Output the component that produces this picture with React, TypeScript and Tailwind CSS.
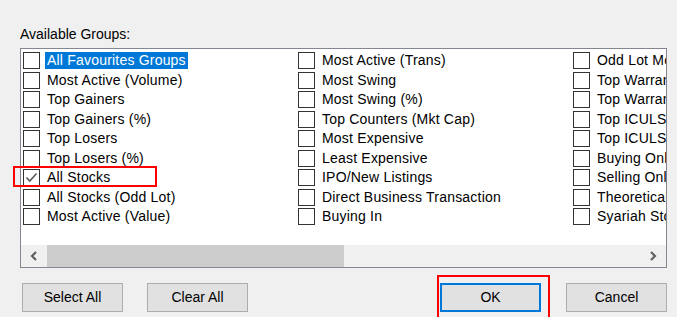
import React from 'react';

const COLUMNS: string[][] = [
  [
    'All Favourites Groups',
    'Most Active (Volume)',
    'Top Gainers',
    'Top Gainers (%)',
    'Top Losers',
    'Top Losers (%)',
    'All Stocks',
    'All Stocks (Odd Lot)',
    'Most Active (Value)',
  ],
  [
    'Most Active (Trans)',
    'Most Swing',
    'Most Swing (%)',
    'Top Counters (Mkt Cap)',
    'Most Expensive',
    'Least Expensive',
    'IPO/New Listings',
    'Direct Business Transaction',
    'Buying In',
  ],
  [
    'Odd Lot Most Active',
    'Top Warrants Gainers',
    'Top Warrants Losers',
    'Top ICULS Gainers',
    'Top ICULS Losers',
    'Buying Only',
    'Selling Only',
    'Theoretical',
    'Syariah Stocks',
  ],
];

const Checkbox: React.FC<{ checked?: boolean }> = ({ checked }) => (
  <span className="w-[17px] h-[17px] shrink-0 border border-[#333333] bg-white flex items-center justify-center">
    {checked && (
      <svg width="13" height="13" viewBox="0 0 13 13">
        <path d="M1.5 6.5 L4.8 10 L11.5 2.5" fill="none" stroke="#5a5a5a" strokeWidth="1.6" />
      </svg>
    )}
  </span>
);

const Row: React.FC<{ label: string; checked?: boolean; selected?: boolean }> = ({ label, checked, selected }) => (
  <div className="h-[19.5px] flex items-center gap-[5px] whitespace-nowrap">
    <Checkbox checked={checked} />
    <span className={`px-[2px] leading-[17px] tracking-[0.2px] ${selected ? 'bg-[#0078d7] text-white' : ''}`}>{label}</span>
  </div>
);

const Button: React.FC<{ label: string; primary?: boolean }> = ({ label, primary }) => (
  <button
    className={`w-[101px] h-[29px] bg-[#e1e1e1] flex items-center justify-center ${
      primary ? 'border-2 border-[#0078d7]' : 'border border-[#adadad]'
    }`}
  >
    {label}
  </button>
);

const Chevron: React.FC<{ dir: 'left' | 'right' }> = ({ dir }) => (
  <svg width="8" height="10" viewBox="0 0 8 10">
    <path
      d={dir === 'left' ? 'M6 1 L2 5 L6 9' : 'M2 1 L6 5 L2 9'}
      fill="none"
      stroke="#606060"
      strokeWidth="2.2"
    />
  </svg>
);

export default function App() {
  return (
    <div className="w-[677px] h-[317px] bg-[#f0f0f0] relative overflow-hidden font-['Liberation_Sans',Arial,sans-serif] text-[14px] text-black">
      <div className="pl-[20px] pt-[26px] leading-[16px]">Available Groups:</div>

      <div className="ml-[20px] mt-[6px] w-[647px] h-[220px] border border-[#828790] bg-white flex flex-col">
        <div className="flex-1 overflow-hidden pt-[2px] pl-[2px]">
          <div className="flex">
            {COLUMNS.map((col, ci) => (
              <div key={ci} className="w-[275px] shrink-0 flex flex-col">
                {col.map((label, ri) => (
                  <Row
                    key={label}
                    label={label}
                    selected={ci === 0 && ri === 0}
                    checked={label === 'All Stocks'}
                  />
                ))}
              </div>
            ))}
          </div>
        </div>

        {/* horizontal scrollbar */}
        <div className="h-[22px] bg-[#f0f0f0] flex">
          <div className="w-[26px] flex items-center justify-center">
            <Chevron dir="left" />
          </div>
          <div className="w-[297px] bg-[#cdcdcd]" />
          <div className="flex-1" />
          <div className="w-[26px] flex items-center justify-center">
            <Chevron dir="right" />
          </div>
        </div>
      </div>

      <div className="mt-[15px] pl-[22px] pr-[10px] flex justify-between">
        <div className="flex gap-[24px]">
          <Button label="Select All" />
          <Button label="Clear All" />
        </div>
        <div className="flex gap-[25px]">
          <div className="relative">
            <Button label="OK" primary />
            <div className="absolute left-[-3px] top-[-8px] right-[-9px] bottom-[-12px] border-2 border-[#ff0000]" />
          </div>
          <Button label="Cancel" />
        </div>
      </div>

      {/* annotation around All Stocks */}
      <div className="absolute left-[13px] top-[166px] w-[144px] h-[21px] border-2 border-[#ff0000]" />
    </div>
  );
}
